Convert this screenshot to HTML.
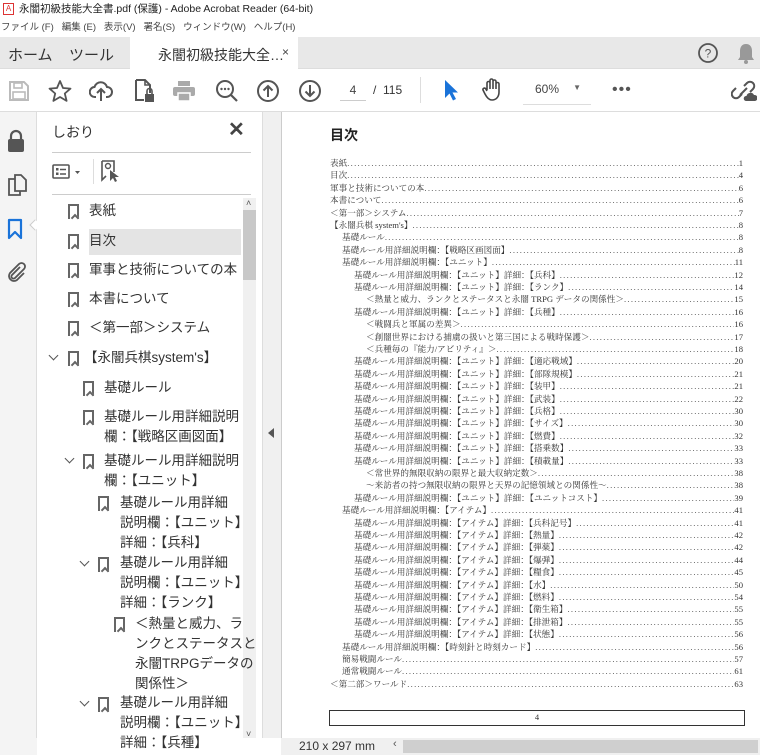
<!DOCTYPE html>
<html><head><meta charset="utf-8">
<style>
*{margin:0;padding:0;box-sizing:border-box}
body{width:760px;height:755px;overflow:hidden;background:#fff;font-family:"Liberation Sans","Noto Sans CJK JP",sans-serif;position:relative;color:#333}
.abs{position:absolute}
#title{top:0;left:0;width:760px;height:18px;background:#fff;font-size:10.5px;color:#222;line-height:18px;padding-left:19px}
#menu{top:18px;left:0;width:760px;height:19px;font-size:9.5px;color:#444;line-height:19px;padding-left:1px}
#tabs{top:37px;left:0;width:760px;height:32px;background:#e8e8e8;border-bottom:1px solid #ddd}
#toolbar{top:69px;left:0;width:760px;height:43px;background:#fff;border-bottom:1px solid #ddd}
#rail{top:112px;left:0;width:37px;height:643px;background:#f4f4f4;border-right:1px solid #ddd}
#panel{top:112px;left:37px;width:225px;height:643px;background:#fff}
#divider{top:112px;left:262px;width:19px;height:626px;background:#f0f0f0;border-left:1px solid #ddd}
#pagearea{top:112px;left:281px;width:479px;height:626px;background:#fff}
#status{top:738px;left:281px;width:479px;height:17px;background:#f0f0f0}
.toc{position:absolute;left:0;right:0;font-family:"Liberation Serif","Noto Serif CJK SC",serif;font-size:8.6px;color:#333;height:12px;line-height:12px;display:flex;white-space:nowrap}
.toc .d{flex:1;overflow:hidden;letter-spacing:1.3px;color:#555}
.bm{position:absolute;font-size:13.5px;color:#333;line-height:20px;white-space:nowrap}
.bmi{position:absolute;width:11px;height:15px;border:2px solid #666;border-bottom:none}
.bmi:after{content:"";position:absolute;left:1.5px;bottom:-2px;width:4px;height:4px;border-left:2px solid #666;border-top:2px solid #666;transform:rotate(45deg);background:#fff}
.chev{position:absolute;width:7px;height:7px;border-right:1.5px solid #555;border-bottom:1.5px solid #555;transform:rotate(45deg)}
</style></head><body>
<div id="title" class="abs"><span class="abs" style="left:3px;top:3px;width:11px;height:12px;border:1px solid #d33;color:#d33;font-size:8px;line-height:10px;text-align:center">A</span>永闇初級技能大全書.pdf (保護) - Adobe Acrobat Reader (64-bit)</div>
<div id="menu" class="abs">ファイル (F)&nbsp;&nbsp;&nbsp;編集 (E)&nbsp;&nbsp;&nbsp;表示(V)&nbsp;&nbsp;&nbsp;署名(S)&nbsp;&nbsp;&nbsp;ウィンドウ(W)&nbsp;&nbsp;&nbsp;ヘルプ(H)</div>
<div id="tabs" class="abs">
 <div class="abs" style="left:8px;top:7px;font-size:15px;color:#333">ホーム</div>
 <div class="abs" style="left:69px;top:7px;font-size:15px;color:#333">ツール</div>
 <div class="abs" style="left:130px;top:0;width:168px;height:32px;background:#fff"></div>
 <div class="abs" style="left:158px;top:8px;font-size:14px;color:#333">永闇初級技能大全…</div>
 <div class="abs" style="left:282px;top:8px;font-size:12px;color:#444">×</div>
 <svg class="abs" style="left:697px;top:5px" width="22" height="22"><circle cx="11" cy="11" r="9" fill="none" stroke="#555" stroke-width="1.8"/><text x="11" y="15.5" font-size="12" text-anchor="middle" fill="#555" font-family="Liberation Sans">?</text></svg>
 <svg class="abs" style="left:737px;top:5px" width="18" height="22"><path d="M9 2c-4 0-6 3-6 7v6l-2 3h16l-2-3V9c0-4-2-7-6-7z" fill="#999"/><circle cx="9" cy="20" r="2" fill="#999"/></svg>
</div>
<div id="toolbar" class="abs">
 <svg class="abs" style="left:8px;top:11px" width="22" height="22"><path d="M2 2h14l4 4v14H2z" fill="none" stroke="#bbb" stroke-width="2"/><rect x="6" y="3" width="8" height="5" fill="none" stroke="#bbb" stroke-width="1.6"/><rect x="5" y="12" width="12" height="7" fill="none" stroke="#bbb" stroke-width="1.6"/></svg>
 <svg class="abs" style="left:48px;top:10px" width="24" height="24"><path d="M12 2l3 7 7.5.6-5.7 4.9 1.8 7.4L12 18l-6.6 3.9 1.8-7.4L1.5 9.6 9 9z" fill="none" stroke="#555" stroke-width="1.8" stroke-linejoin="round"/></svg>
 <svg class="abs" style="left:89px;top:10px" width="24" height="24"><path d="M7 18H6a5 5 0 0 1-.5-10A6.5 6.5 0 0 1 18 8a4.5 4.5 0 0 1 0 10h-1" fill="none" stroke="#555" stroke-width="2"/><path d="M12 22V11M8 14l4-4 4 4" fill="none" stroke="#555" stroke-width="2"/></svg>
 <svg class="abs" style="left:132px;top:9px" width="24" height="26"><path d="M4 2h9l5 5v8M4 2v20h8" fill="none" stroke="#555" stroke-width="2"/><path d="M13 2v5h5" fill="none" stroke="#555" stroke-width="1.6"/><rect x="13" y="16" width="9" height="8" fill="#555"/><path d="M15 16v-3a2.5 2.5 0 0 1 5 0v3" fill="none" stroke="#555" stroke-width="1.6"/></svg>
 <svg class="abs" style="left:172px;top:11px" width="24" height="22"><rect x="6" y="1" width="12" height="5" fill="#aaa"/><rect x="1" y="7" width="22" height="9" rx="2" fill="#aaa"/><rect x="6" y="13" width="12" height="8" fill="#aaa" stroke="#fff" stroke-width="1.5"/></svg>
 <svg class="abs" style="left:215px;top:10px" width="24" height="24"><circle cx="10" cy="10" r="8" fill="none" stroke="#555" stroke-width="2"/><path d="M16 16l6 6" stroke="#555" stroke-width="2.2"/><circle cx="6.5" cy="10" r="1.2" fill="#555"/><circle cx="10" cy="10" r="1.2" fill="#555"/><circle cx="13.5" cy="10" r="1.2" fill="#555"/></svg>
 <svg class="abs" style="left:256px;top:10px" width="24" height="24"><circle cx="12" cy="12" r="10" fill="none" stroke="#555" stroke-width="2"/><path d="M12 18V7M7.5 11.5L12 7l4.5 4.5" fill="none" stroke="#555" stroke-width="2"/></svg>
 <svg class="abs" style="left:298px;top:10px" width="24" height="24"><circle cx="12" cy="12" r="10" fill="none" stroke="#555" stroke-width="2"/><path d="M12 6v11M7.5 12.5L12 17l4.5-4.5" fill="none" stroke="#555" stroke-width="2"/></svg>
 <div class="abs" style="left:340px;top:14px;width:26px;text-align:center;font-size:12px;color:#444;border-bottom:1px solid #ccc;padding-bottom:3px">4</div>
 <div class="abs" style="left:373px;top:14px;font-size:12px;color:#333">/&nbsp;&nbsp;115</div>
 <div class="abs" style="left:420px;top:8px;width:1px;height:26px;background:#ddd"></div>
 <svg class="abs" style="left:443px;top:10px" width="16" height="22"><path d="M2 1v18l4.5-4.5 3.5 7 3-1.5-3.5-6.5H15z" fill="#1a73d9"/></svg>
 <svg class="abs" style="left:481px;top:8px" width="24" height="26"><path d="M6 13V6a1.5 1.5 0 0 1 3 0v6M9 12V3.5a1.5 1.5 0 0 1 3 0V12M12 12V4.5a1.5 1.5 0 0 1 3 0V12M15 12V7a1.5 1.5 0 0 1 3 0v8c0 5-3 8-7 8-3 0-5-2-7-6l-2-4a1.5 1.5 0 0 1 2.5-1.5L6 14" fill="none" stroke="#444" stroke-width="1.6" stroke-linejoin="round"/></svg>
 <div class="abs" style="left:523px;top:13px;width:68px;height:23px;border-bottom:1px solid #ddd;font-size:12px;color:#444;padding-left:12px">60%<span style="position:absolute;right:10px;top:1px;font-size:8px;color:#666">▼</span></div>
 <div class="abs" style="left:612px;top:12px;font-size:16px;color:#555;letter-spacing:1px">•••</div>
 <svg class="abs" style="left:731px;top:10px" width="26" height="24"><path d="M11 6l3-3a4 4 0 0 1 6 6l-3 3M9 14l-3 3a4 4 0 0 1-6-6l3-3M7 15l7-7" fill="none" stroke="#555" stroke-width="2" transform="translate(2,1)"/><path d="M15 22h9a3 3 0 0 0-1-6 4 4 0 0 0-7.5 1A2.5 2.5 0 0 0 15 22z" fill="#555"/></svg>
</div>
<div id="rail" class="abs">
 <svg class="abs" style="left:6px;top:17px" width="20" height="24"><path d="M5 11V7a5 5 0 0 1 10 0v4" fill="none" stroke="#555" stroke-width="2.2"/><rect x="2" y="10" width="16" height="13" rx="2" fill="#555"/></svg>
 <svg class="abs" style="left:6px;top:61px" width="22" height="24"><path d="M9 2h6l5 5v11H9z" fill="none" stroke="#555" stroke-width="1.8"/><path d="M9 6H3v16h11v-4" fill="none" stroke="#555" stroke-width="1.8"/></svg>
 <svg class="abs" style="left:7px;top:106px" width="16" height="22"><path d="M2 2h12v18l-6-6-6 6z" fill="none" stroke="#1a73d9" stroke-width="2.2" stroke-linejoin="round"/></svg>
 <svg class="abs" style="left:5px;top:148px" width="22" height="22"><path d="M15 7l-8 8a2 2 0 0 0 3 3l9-9a3.5 3.5 0 0 0-5-5l-9 9a5 5 0 0 0 7 7l7-7" fill="none" stroke="#555" stroke-width="1.8"/></svg>
</div>
<div class="abs" style="left:31px;top:221px;width:8px;height:8px;background:#fff;border-left:1px solid #ccc;border-bottom:1px solid #ccc;transform:rotate(45deg)"></div>
<div id="panel" class="abs">
 <div class="abs" style="left:15px;top:10px;font-size:14px;color:#333">しおり</div>
 <div class="abs" style="left:191px;top:5px;font-size:20px;color:#444;font-weight:bold">✕</div>
 <div class="abs" style="left:15px;top:40px;width:199px;height:1px;background:#ccc"></div>
 <svg class="abs" style="left:15px;top:52px" width="32" height="16"><rect x="1" y="1" width="16" height="13" rx="1" fill="none" stroke="#555" stroke-width="1.6"/><rect x="4" y="4" width="2.5" height="2.5" fill="#555"/><rect x="4" y="8.5" width="2.5" height="2.5" fill="#555"/><path d="M8 5.5h6M8 10h6" stroke="#555" stroke-width="1.5"/><path d="M23 7l2.5 3 2.5-3z" fill="#555"/></svg>
 <div class="abs" style="left:56px;top:47px;width:1px;height:25px;background:#ddd"></div>
 <svg class="abs" style="left:63px;top:47px" width="22" height="24"><path d="M2 2h12v11M2 2v19l4-4" fill="none" stroke="#555" stroke-width="1.6"/><circle cx="8" cy="7" r="2.5" fill="none" stroke="#555" stroke-width="1.4"/><path d="M10 11v11l3-3 2 4 2-1-2-4h4z" fill="#555"/></svg>
 <div class="abs" style="left:15px;top:82px;width:199px;height:1px;background:#ccc"></div>
 <div class="abs" style="left:52px;top:117px;width:152px;height:26px;background:#e4e4e4"></div>
 <div class="abs" style="left:206px;top:86px;width:13px;height:540px;background:#f0f0f0"></div>
 <div class="abs" style="left:206px;top:98px;width:13px;height:70px;background:#c8c8c8"></div>
 <div class="abs" style="left:209px;top:86px;font-size:9px;color:#555">˄</div>
 <div class="abs" style="left:209px;top:617px;font-size:9px;color:#555">˅</div>
</div>
<div class="bmi" style="left:68px;top:204px"></div><div class="bm" style="left:89px;top:201px">表紙</div>
<div class="bmi" style="left:68px;top:234px"></div><div class="bm" style="left:89px;top:231px">目次</div>
<div class="bmi" style="left:68px;top:263px"></div><div class="bm" style="left:89px;top:260px">軍事と技術についての本</div>
<div class="bmi" style="left:68px;top:292px"></div><div class="bm" style="left:89px;top:289px">本書について</div>
<div class="bmi" style="left:68px;top:321px"></div><div class="bm" style="left:89px;top:318px">＜第一部＞システム</div>
<div class="chev" style="left:50px;top:352px"></div><div class="bmi" style="left:68px;top:351px"></div><div class="bm" style="left:84px;top:348px">【永闇兵棋system's】</div>
<div class="bmi" style="left:83px;top:381px"></div><div class="bm" style="left:104px;top:378px">基礎ルール</div>
<div class="bmi" style="left:83px;top:410px"></div><div class="bm" style="left:104px;top:407px">基礎ルール用詳細説明<br>欄：【戦略区画図面】</div>
<div class="chev" style="left:66px;top:455px"></div><div class="bmi" style="left:83px;top:454px"></div><div class="bm" style="left:104px;top:451px">基礎ルール用詳細説明<br>欄：【ユニット】</div>
<div class="bmi" style="left:98px;top:496px"></div><div class="bm" style="left:120px;top:493px">基礎ルール用詳細<br>説明欄：【ユニット】<br>詳細：【兵科】</div>
<div class="chev" style="left:81px;top:558px"></div><div class="bmi" style="left:98px;top:557px"></div><div class="bm" style="left:120px;top:553px">基礎ルール用詳細<br>説明欄：【ユニット】<br>詳細：【ランク】</div>
<div class="bmi" style="left:114px;top:617px"></div><div class="bm" style="left:135px;top:614px">＜熱量と威力、ラ<br>ンクとステータスと<br>永闇TRPGデータの<br>関係性＞</div>
<div class="chev" style="left:81px;top:698px"></div><div class="bmi" style="left:98px;top:697px"></div><div class="bm" style="left:120px;top:693px">基礎ルール用詳細<br>説明欄：【ユニット】<br>詳細：【兵種】</div>
<div id="divider" class="abs"><div class="abs" style="left:5px;top:316px;width:0;height:0;border-right:6px solid #555;border-top:5px solid transparent;border-bottom:5px solid transparent"></div></div>
<div id="pagearea" class="abs">
 <div class="abs" style="left:0;top:0;width:1px;height:626px;background:#ccc"></div>
 <div class="abs" style="left:49px;top:13px;font-size:14px;font-weight:bold;color:#222">目次</div>
 <div id="toc" class="abs" style="left:49px;top:45px;width:413px;height:530px"></div>
 <div class="abs" style="left:48px;top:598px;width:416px;height:16px;border:1.5px solid #333;text-align:center;font-family:'Liberation Serif',serif;font-size:8.5px;line-height:13px">4</div>
</div>
<div id="status" class="abs">
 <div class="abs" style="left:18px;top:1px;font-size:12px;color:#333">210 x 297 mm</div>
 <div class="abs" style="left:112px;top:0;font-size:11px;color:#555">‹</div>
 <div class="abs" style="left:122px;top:2px;width:355px;height:13px;background:#cfcfcf"></div>
</div>
<div class="abs" style="left:0;top:738px;width:37px;height:17px;background:#f4f4f4"></div>
<script>
var D=[[0,"表紙",1],[0,"目次",4],[0,"軍事と技術についての本",6],[0,"本書について",6],[0,"＜第一部＞システム",7],[0,"【永闇兵棋 system's】",8],
[1,"基礎ルール",8],[1,"基礎ルール用詳細説明欄：【戦略区画図面】",8],[1,"基礎ルール用詳細説明欄：【ユニット】",11],
[2,"基礎ルール用詳細説明欄：【ユニット】詳細：【兵科】",12],[2,"基礎ルール用詳細説明欄：【ユニット】詳細：【ランク】",14],
[3,"＜熱量と威力、ランクとステータスと永闇 TRPG データの関係性＞",15],[2,"基礎ルール用詳細説明欄：【ユニット】詳細：【兵種】",16],
[3,"＜戦闘兵と軍属の差異＞",16],[3,"＜創闇世界における捕虜の扱いと第三国による戦時保護＞",17],[3,"＜兵種毎の『能力/アビリティ』＞",18]];
var u=[["適応戦域",20],["部隊規模",21],["装甲",21],["武装",22],["兵格",30],["サイズ",30],["燃費",32],["搭乗数",33],["積載量",33]];
u.forEach(function(x){D.push([2,"基礎ルール用詳細説明欄：【ユニット】詳細：【"+x[0]+"】",x[1]])});
D.push([3,"＜常世界的無限収納の限界と最大収納定数＞",38],[3,"～来訪者の持つ無限収納の限界と天界の記憶領域との関係性～",38],[2,"基礎ルール用詳細説明欄：【ユニット】詳細：【ユニットコスト】",39],[1,"基礎ルール用詳細説明欄：【アイテム】",41]);
var a=[["兵科記号",41],["熱量",42],["弾薬",42],["爆弾",44],["糧食",45],["水",50],["燃料",54],["衛生箱",55],["排泄箱",55],["状態",56]];
a.forEach(function(x){D.push([2,"基礎ルール用詳細説明欄：【アイテム】詳細：【"+x[0]+"】",x[1]])});
D.push([1,"基礎ルール用詳細説明欄：【時刻針と時刻カード】",56],[1,"簡易戦闘ルール",57],[1,"通常戦闘ルール",61],[0,"＜第二部＞ワールド",63]);
var t=document.getElementById("toc"),h="",dots=new Array(200).join(".");
D.forEach(function(e,i){h+='<div class="toc" style="top:'+(i*12.4)+'px;padding-left:'+(e[0]*12)+'px"><span>'+e[1]+'</span><span class="d">'+dots+'</span><span>'+e[2]+'</span></div>'});
t.innerHTML=h;
</script>
</body></html>
